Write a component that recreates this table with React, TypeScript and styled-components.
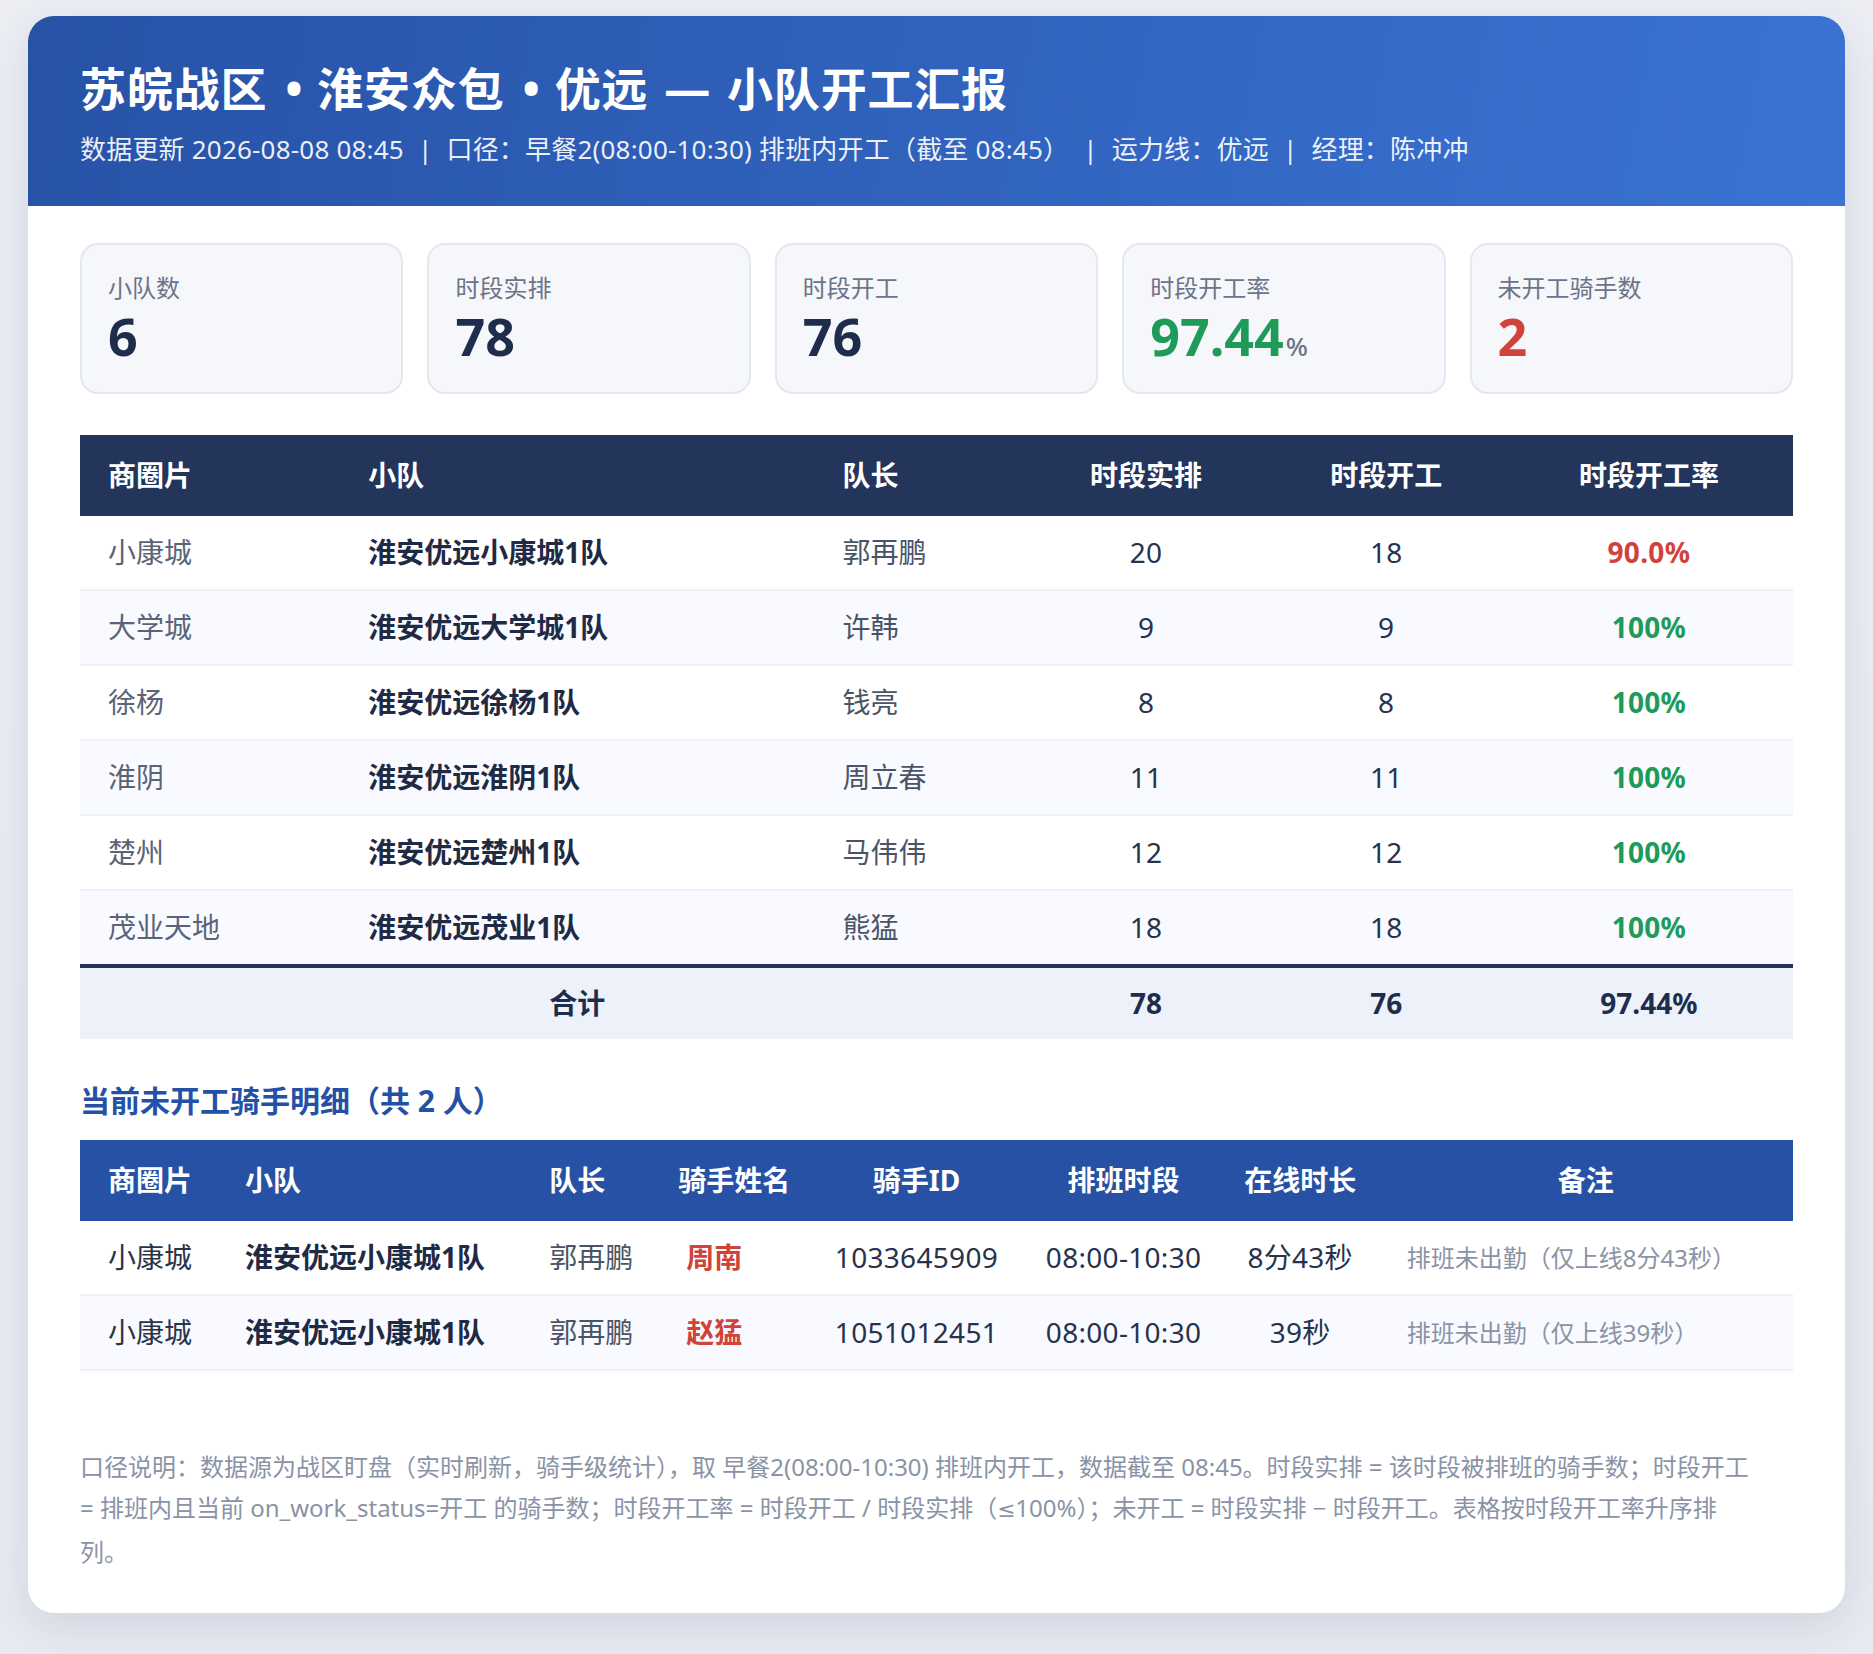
import React from "react";
import styled, { createGlobalStyle } from "styled-components";

const GlobalStyle = createGlobalStyle`
  html, body { margin: 0; padding: 0; }
  body {
    background: linear-gradient(180deg, #eceef4 0%, #e7eaf1 100%);
    font-family: "Noto Sans", "Noto Sans CJK SC", sans-serif;
    min-height: 1654px;
  }
  * { box-sizing: border-box; }
`;

const Page = styled.div`
  padding: 16px 28px 40px;
`;

const Card = styled.div`
  background: #ffffff;
  border-radius: 26px;
  overflow: hidden;
  box-shadow: 0 12px 40px rgba(30, 50, 100, 0.12);
`;

const Header = styled.header`
  background: linear-gradient(100deg, #2752a6 0%, #3a73d4 100%);
  padding: 45px 52px 37px;
  color: #ffffff;
`;

const Title = styled.h1`
  margin: 0 0 14px;
  font-size: 46px;
  line-height: 55px;
  font-weight: 700;
  letter-spacing: 0.8px;
`;

const Dot = styled.span`
  margin: 0 14px 0 18px;
`;

const Dash = styled.span`
  margin: 0 16px;
`;

const Subtitle = styled.div`
  font-size: 26px;
  line-height: 39px;
  letter-spacing: 0.2px;
  color: rgba(255, 255, 255, 0.92);
`;

const Sep = styled.span`
  margin: 0 14px;
`;

const Body = styled.div`
  padding: 37px 52px 41px;
`;

const Stats = styled.div`
  display: grid;
  grid-template-columns: repeat(5, 1fr);
  gap: 24px;
  margin-bottom: 41px;
`;

const StatCard = styled.div`
  background: #f6f7fb;
  border: 2px solid #e3e7f0;
  border-radius: 18px;
  padding: 27px 26px 27px;
`;

const StatLabel = styled.div`
  font-size: 24px;
  line-height: 32px;
  color: #6b7489;
  margin-bottom: 3px;
`;

type Tone = "dark" | "green" | "red";
const toneColor: Record<Tone, string> = {
  dark: "#1f2d4d",
  green: "#1e9b58",
  red: "#d0433a",
};

const StatValue = styled.div<{ $tone: Tone }>`
  font-size: 52px;
  line-height: 58px;
  font-weight: 700;
  color: ${(p) => toneColor[p.$tone]};
`;

const Unit = styled.span`
  font-size: 26px;
  line-height: 1;
  font-weight: 500;
  color: #6b7489;
  margin-left: 2px;
`;

const Table = styled.table`
  width: 100%;
  border-collapse: collapse;
  table-layout: fixed;
  font-size: 28px;
`;

const HeadRow = styled.tr<{ $bg: string }>`
  background: ${(p) => p.$bg};
`;

type Align = "left" | "center";

const Th = styled.th<{ $align?: Align }>`
  color: #ffffff;
  font-weight: 700;
  text-align: ${(p) => p.$align ?? "left"};
  padding: 21px ${(p) => (p.$align === "center" ? "8px" : "28px")};
  line-height: 39px;
  white-space: nowrap;
`;

const Row = styled.tr<{ $alt: boolean }>`
  background: ${(p) => (p.$alt ? "#f8faff" : "#ffffff")};
`;

type CellKind = "muted" | "team" | "person" | "num" | "dark" | "name" | "note";

const cellStyle: Record<CellKind, string> = {
  muted: "color: #5b6477; font-weight: 400;",
  team: "color: #1f2a44; font-weight: 700;",
  person: "color: #4a5467; font-weight: 400;",
  num: "color: #27324d; font-weight: 400; letter-spacing: 0.3px;",
  dark: "color: #2a3449; font-weight: 400;",
  name: "color: #d0433a; font-weight: 700; padding-left: 36px;",
  note: "color: #8b93a5; font-weight: 400; font-size: 24px;",
};

const Td = styled.td<{ $align?: Align; $kind: CellKind }>`
  text-align: ${(p) => p.$align ?? "left"};
  padding: 17px ${(p) => (p.$align === "center" ? "8px" : "28px")};
  line-height: 39px;
  border-bottom: 2px solid #edf0f5;
  white-space: nowrap;
  ${(p) => cellStyle[p.$kind]}
`;

const Rate = styled.span<{ $ok: boolean }>`
  font-weight: 700;
  color: ${(p) => (p.$ok ? "#1e9b58" : "#d0433a")};
`;

const TotalRow = styled.tr`
  background: #edf2fa;
`;

const TotalCell = styled.td<{ $lead?: boolean }>`
  border-top: 4px solid #22335a;
  text-align: center;
  padding: ${(p) => (p.$lead ? "16px 28px 16px 78px" : "16px 8px")};
  line-height: 39px;
  font-weight: 700;
  color: #1f2d4d;
`;

const SectionTitle = styled.h2`
  margin: 41px 0 18px;
  font-size: 30px;
  line-height: 42px;
  font-weight: 700;
  color: #2450a5;
`;

const Footnote = styled.p`
  margin: 75px 0 0;
  font-size: 24px;
  line-height: 41.3px;
  color: #8a93a6;
`;

const MathSym = styled.span`
  font-family: "DejaVu Sans", sans-serif;
  font-size: 0.9em;
`;

const teams = [
  { area: "小康城", team: "淮安优远小康城1队", lead: "郭再鹏", plan: 20, work: 18, rate: "90.0%", ok: false },
  { area: "大学城", team: "淮安优远大学城1队", lead: "许韩", plan: 9, work: 9, rate: "100%", ok: true },
  { area: "徐杨", team: "淮安优远徐杨1队", lead: "钱亮", plan: 8, work: 8, rate: "100%", ok: true },
  { area: "淮阴", team: "淮安优远淮阴1队", lead: "周立春", plan: 11, work: 11, rate: "100%", ok: true },
  { area: "楚州", team: "淮安优远楚州1队", lead: "马伟伟", plan: 12, work: 12, rate: "100%", ok: true },
  { area: "茂业天地", team: "淮安优远茂业1队", lead: "熊猛", plan: 18, work: 18, rate: "100%", ok: true },
];

const riders = [
  { area: "小康城", team: "淮安优远小康城1队", lead: "郭再鹏", name: "周南", id: "1033645909", slot: "08:00-10:30", online: "8分43秒", note: "排班未出勤（仅上线8分43秒）" },
  { area: "小康城", team: "淮安优远小康城1队", lead: "郭再鹏", name: "赵猛", id: "1051012451", slot: "08:00-10:30", online: "39秒", note: "排班未出勤（仅上线39秒）" },
];

const mainCols = [260, 474, 210, 243, 237, 288];
const detailCols = [137, 304, 129, 157, 218, 196, 157, 414];

export default function App() {
  return (
    <>
      <GlobalStyle />
      <Page>
        <Card>
          <Header>
            <Title>
              苏皖战区<Dot>•</Dot>淮安众包<Dot>•</Dot>优远<Dash>—</Dash>小队开工汇报
            </Title>
            <Subtitle>
              数据更新 2026-08-08 08:45<Sep>|</Sep>口径：早餐2(08:00-10:30) 排班内开工（截至 08:45）
              <Sep>|</Sep>运力线：优远<Sep>|</Sep>经理：陈冲冲
            </Subtitle>
          </Header>
          <Body>
            <Stats>
              <StatCard>
                <StatLabel>小队数</StatLabel>
                <StatValue $tone="dark">6</StatValue>
              </StatCard>
              <StatCard>
                <StatLabel>时段实排</StatLabel>
                <StatValue $tone="dark">78</StatValue>
              </StatCard>
              <StatCard>
                <StatLabel>时段开工</StatLabel>
                <StatValue $tone="dark">76</StatValue>
              </StatCard>
              <StatCard>
                <StatLabel>时段开工率</StatLabel>
                <StatValue $tone="green">
                  97.44<Unit>%</Unit>
                </StatValue>
              </StatCard>
              <StatCard>
                <StatLabel>未开工骑手数</StatLabel>
                <StatValue $tone="red">2</StatValue>
              </StatCard>
            </Stats>

            <Table>
              <colgroup>
                {mainCols.map((w, i) => (
                  <col key={i} style={{ width: w }} />
                ))}
              </colgroup>
              <thead>
                <HeadRow $bg="#23355b">
                  <Th>商圈片</Th>
                  <Th>小队</Th>
                  <Th>队长</Th>
                  <Th $align="center">时段实排</Th>
                  <Th $align="center">时段开工</Th>
                  <Th $align="center">时段开工率</Th>
                </HeadRow>
              </thead>
              <tbody>
                {teams.map((t, i) => (
                  <Row key={t.team} $alt={i % 2 === 1}>
                    <Td $kind="muted">{t.area}</Td>
                    <Td $kind="team">{t.team}</Td>
                    <Td $kind="person">{t.lead}</Td>
                    <Td $kind="num" $align="center">{t.plan}</Td>
                    <Td $kind="num" $align="center">{t.work}</Td>
                    <Td $kind="num" $align="center">
                      <Rate $ok={t.ok}>{t.rate}</Rate>
                    </Td>
                  </Row>
                ))}
              </tbody>
              <tfoot>
                <TotalRow>
                  <TotalCell colSpan={3} $lead>
                    合计
                  </TotalCell>
                  <TotalCell>78</TotalCell>
                  <TotalCell>76</TotalCell>
                  <TotalCell>97.44%</TotalCell>
                </TotalRow>
              </tfoot>
            </Table>

            <SectionTitle>当前未开工骑手明细（共 2 人）</SectionTitle>

            <Table>
              <colgroup>
                {detailCols.map((w, i) => (
                  <col key={i} style={{ width: w }} />
                ))}
              </colgroup>
              <thead>
                <HeadRow $bg="#2651a5">
                  <Th>商圈片</Th>
                  <Th>小队</Th>
                  <Th>队长</Th>
                  <Th>骑手姓名</Th>
                  <Th $align="center">骑手ID</Th>
                  <Th $align="center">排班时段</Th>
                  <Th $align="center">在线时长</Th>
                  <Th $align="center">备注</Th>
                </HeadRow>
              </thead>
              <tbody>
                {riders.map((r, i) => (
                  <Row key={r.id} $alt={i % 2 === 1}>
                    <Td $kind="dark">{r.area}</Td>
                    <Td $kind="team">{r.team}</Td>
                    <Td $kind="person">{r.lead}</Td>
                    <Td $kind="name">{r.name}</Td>
                    <Td $kind="num" $align="center">{r.id}</Td>
                    <Td $kind="num" $align="center">{r.slot}</Td>
                    <Td $kind="num" $align="center">{r.online}</Td>
                    <Td $kind="note">{r.note}</Td>
                  </Row>
                ))}
              </tbody>
            </Table>

            <Footnote>
              口径说明：数据源为战区盯盘（实时刷新，骑手级统计），取 早餐2(08:00-10:30) 排班内开工，数据截至
              08:45。时段实排 = 该时段被排班的骑手数；时段开工
              <br />= 排班内且当前 on_work_status=开工 的骑手数；时段开工率 = 时段开工 / 时段实排（
              <MathSym>≤</MathSym>100%）；未开工 = 时段实排 − 时段开工。表格按时段开工率升序排
              <br />列。
            </Footnote>
          </Body>
        </Card>
      </Page>
    </>
  );
}
